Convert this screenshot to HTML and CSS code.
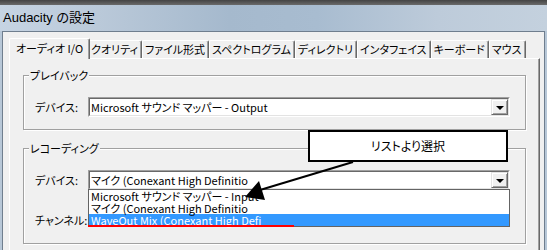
FILE: index.html
```html
<!DOCTYPE html>
<html lang="ja">
<head>
    <meta charset="UTF-8">
    <title>Audacity の設定</title>
    <link rel="stylesheet" href="styles.css">
</head>
<body>
    <div class="window">
        <div class="caption">
            <div class="caption-edge"></div>
            <div class="titlebar">Audacity の設定</div>
        </div>
        <div class="client">
            <div class="tabs">
                <span class="tab selected">オーディオ I/O</span>
                <span class="tab">クオリティ</span>
                <span class="tab">ファイル形式</span>
                <span class="tab">スペクトログラム</span>
                <span class="tab">ディレクトリ</span>
                <span class="tab">インタフェイス</span>
                <span class="tab">キーボード</span>
                <span class="tab">マウス</span>
            </div>
            <div class="panel">
                <fieldset class="group">
                    <legend>プレイバック</legend>
                    <div class="row">
                        <span class="label">デバイス:</span>
                        <div class="combo">
                            <span class="value">Microsoft サウンド マッパー - Output</span>
                            <span class="drop-btn"><span class="tri"></span></span>
                        </div>
                    </div>
                </fieldset>
                <fieldset class="group rec">
                    <legend>レコーディング</legend>
                    <div class="row">
                        <span class="label">デバイス:</span>
                        <div class="combo">
                            <span class="value">マイク (Conexant High Definitio</span>
                            <span class="drop-btn"><span class="tri"></span></span>
                            <ul class="droplist">
                                <li>Microsoft サウンド マッパー - Input</li>
                                <li>マイク (Conexant High Definitio</li>
                                <li class="hilite">WaveOut Mix (Conexant High Defi</li>
                                <li class="redline"></li>
                            </ul>
                        </div>
                    </div>
                    <div class="row channel">
                        <span class="label">チャンネル:</span>
                    </div>
                </fieldset>
            </div>
        </div>

        <!-- 注釈 -->
        <div class="callout">リストより選択</div>
        <svg class="arrow" width="547" height="250" viewBox="0 0 547 250">
            <line x1="353" y1="162" x2="260" y2="190" stroke="#000" stroke-width="2"/>
            <polygon points="245,197 265,200 259,181" fill="#000"/>
        </svg>
    </div>
</body>
</html>
```

FILE: styles.css
```css
* {
    box-sizing: border-box;
}
body {
    margin: 0;
    font-family: "Noto Sans CJK JP", sans-serif;
    font-size: 11px;
    font-feature-settings: "palt";
    color: #000;
    background: #f0f0f0;
}
.window {
    position: relative;
    width: 547px;
    height: 250px;
    overflow: hidden;
    background: #f0f0f0;
}
.caption-edge {
    height: 5px;
    background: linear-gradient(#444, #6a6a6a);
}
.titlebar {
    height: 26px;
    padding: 2px 0 0 3px;
    font-family: "Liberation Sans", "Noto Sans CJK JP", sans-serif;
    font-size: 13px;
    line-height: 22px;
    color: #000;
    background: linear-gradient(90deg, #c6d4e3 0%, #bac9d9 18%, #a5b9cd 42%, #a8bcd0 58%, #bdcbda 80%, #c4d1de 100%);
}
.client {
    height: 219px;
    margin: 0 2px;
    border: 1px solid #6f7e8e;
    border-bottom: none;
    padding: 6px 4px 0 6px;
    background: #f0f0f0;
    box-shadow: -2px 0 0 #b7c7d7, 2px 0 0 #b7c7d7;
}
.tabs {
    display: flex;
    align-items: flex-end;
    height: 20px;
    padding-left: 2px;
    position: relative;
    z-index: 1;
}
.tab {
    height: 18px;
    padding: 0 3px 0 2px;
    line-height: 16px;
    border-top: 1px solid #fff;
    border-left: 1px solid #fff;
    border-right: 1px solid #696969;
    border-radius: 2px 2px 0 0;
    box-shadow: inset -1px 0 0 #a0a0a0;
    white-space: nowrap;
}
.tab.selected {
    height: 21px;
    margin: 0 -2px -1px -2px;
    padding: 1px 6px 0;
    background: #f0f0f0;
    position: relative;
    z-index: 2;
}
.panel {
    height: 200px;
    border-top: 1px solid #fff;
    border-left: 1px solid #fff;
    border-right: 1px solid #696969;
    box-shadow: inset -1px 0 0 #a0a0a0;
    padding: 9px 13px 0 13px;
}
.group {
    margin: 0;
    padding: 15px 15px 12px 11px;
    border: 1px solid #a0a0a0;
    box-shadow: 1px 1px 0 #fff, inset 1px 1px 0 #fff;
}
.group legend {
    margin-left: -6px;
    padding: 0 1px;
    line-height: 14px;
    background: #f0f0f0;
}
.group.rec {
    margin-top: 11px;
    padding-bottom: 13px;
}
.row {
    display: flex;
    align-items: center;
    height: 20px;
}
.label {
    width: 53px;
    flex: none;
    white-space: nowrap;
}
.combo {
    position: relative;
    flex: 1;
    height: 20px;
    border: 1px solid;
    border-color: #a0a0a0 #fff #fff #a0a0a0;
    background: #fff;
    display: flex;
}
.combo::before {
    content: "";
    position: absolute;
    inset: 0;
    border: 1px solid;
    border-color: #696969 #e3e3e3 #e3e3e3 #696969;
    pointer-events: none;
}
.value {
    flex: 1;
    padding-left: 2px;
    padding-top: 1px;
    line-height: 16px;
    white-space: nowrap;
    overflow: hidden;
}
.drop-btn {
    width: 17px;
    height: 16px;
    margin: 1px 1px 1px 0;
    background: #f0f0f0;
    border: 1px solid;
    border-color: #e3e3e3 #696969 #696969 #e3e3e3;
    box-shadow: inset 1px 1px 0 #fff, inset -1px -1px 0 #a0a0a0;
    display: flex;
    align-items: center;
    justify-content: center;
}
.tri {
    width: 0;
    height: 0;
    border-left: 4px solid transparent;
    border-right: 4px solid transparent;
    border-top: 4px solid #000;
    margin-top: 1px;
}
.droplist {
    position: absolute;
    top: 18px;
    left: -1px;
    right: -1px;
    margin: 0;
    padding: 0;
    list-style: none;
    background: #fff;
    border: 1px solid #646464;
    z-index: 3;
}
.droplist li {
    height: 12px;
    padding-left: 2px;
    line-height: 12px;
    white-space: nowrap;
}
.droplist li.hilite {
    background: #3399ff;
    color: #fff;
}
.droplist li.redline {
    position: absolute;
    left: -1px;
    bottom: -1px;
    width: 206px;
    height: 2px;
    padding: 0;
    background: #ff0000;
}
.row.channel {
    margin-top: 20px;
}
.callout {
    position: absolute;
    left: 308px;
    top: 130px;
    width: 200px;
    height: 32px;
    border: 2px solid #000;
    background: #fff;
    font-size: 12px;
    text-align: center;
    line-height: 28px;
    z-index: 5;
}
.arrow {
    position: absolute;
    left: 0;
    top: 0;
    z-index: 6;
}
```
